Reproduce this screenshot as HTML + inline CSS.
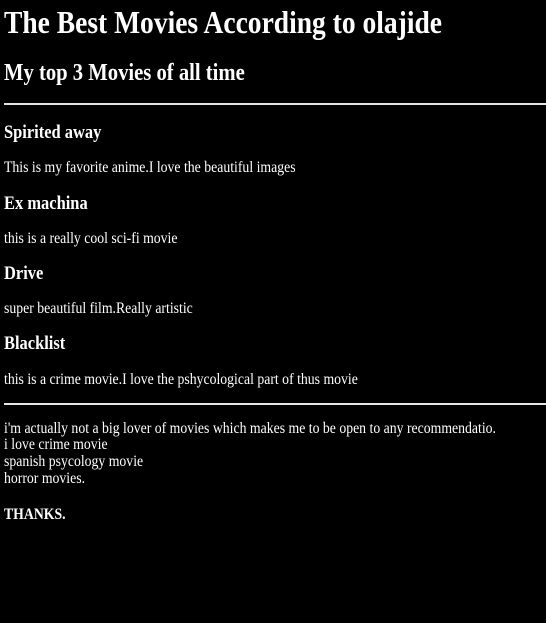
<!DOCTYPE html>
<html><head><meta charset="utf-8"><style>
html,body{margin:0;padding:0;background:#000;width:546px;height:623px;overflow:hidden}
body{font-family:"Liberation Serif","Times New Roman",serif;color:#fff;position:relative}
.t{position:absolute;left:4px;white-space:nowrap;transform:scaleX(0.86);transform-origin:0 0}
.h1{font-size:32px;line-height:32px;font-weight:bold}
.h2{font-size:24px;line-height:24px;font-weight:bold}
.h3{font-size:18.72px;line-height:18.72px;font-weight:bold;transform:scaleX(0.88)}
.p{font-size:16px;line-height:16px}
.hr{position:absolute;left:4px;right:0;height:2px;background:#e6e6e6}
</style></head><body>
<div class="t h1" style="top:6px">The Best Movies According to olajide</div>
<div class="t h2" style="top:61px">My top 3 Movies of all time</div>
<div class="hr" style="top:103px"></div>
<div class="t h3" style="top:124px">Spirited away</div>
<div class="t p" style="top:160px">This is my favorite anime.I love the beautiful images</div>
<div class="t h3" style="top:195px">Ex machina</div>
<div class="t p" style="top:231px">this is a really cool sci-fi movie</div>
<div class="t h3" style="top:265px">Drive</div>
<div class="t p" style="top:301px">super beautiful film.Really artistic</div>
<div class="t h3" style="top:335px">Blacklist</div>
<div class="t p" style="top:372px">this is a crime movie.I love the pshycological part of thus movie</div>
<div class="hr" style="top:403px"></div>
<div class="t p" style="top:421px">i'm actually not a big lover of movies which makes me to be open to any recommendatio.</div>
<div class="t p" style="top:437px">i love crime movie</div>
<div class="t p" style="top:454px">spanish psycology movie</div>
<div class="t p" style="top:471px">horror movies.</div>
<div class="t p" style="top:507px;font-weight:bold">THANKS.</div>
</body></html>
